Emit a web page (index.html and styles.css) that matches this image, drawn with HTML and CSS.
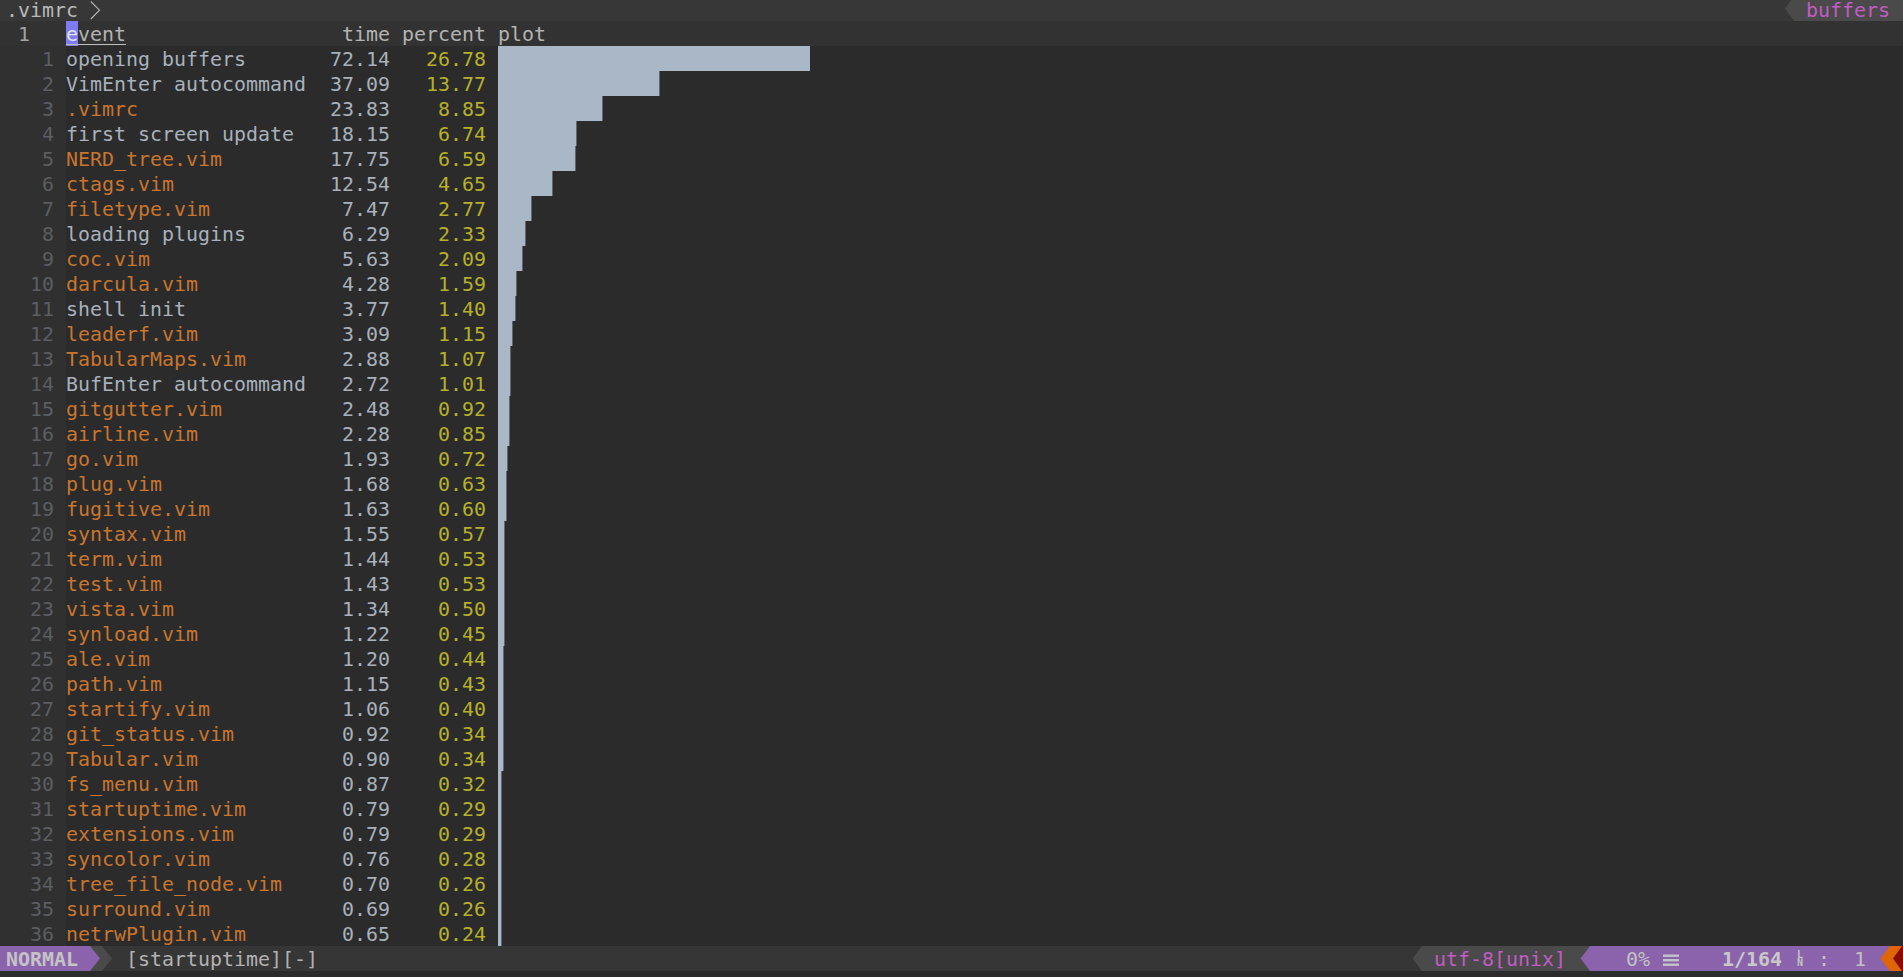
FILE: index.html
```html
<!DOCTYPE html>
<html>
<head>
<meta charset="utf-8">
<title>startuptime</title>
<link rel="stylesheet" href="styles.css">
</head>
<body>
<div class="screen">
  <div class="tabline">
    <span class="tabname">.vimrc</span>
    <svg class="chev" width="12" height="21" viewBox="0 0 12 21"><polyline points="0.8,1.5 9.5,10.2 0.8,19" fill="none" stroke="#b4b4b4" stroke-width="1.1"/></svg>
    <span class="spacer"></span>
    <svg class="pl" width="12" height="21" viewBox="0 0 12 21"><polygon points="12,-4 3,8.5 12,21" fill="#4a4a4a"/></svg>
    <span class="tabsel">buffers</span>
  </div>

  <div class="buffer">
    <div class="row cur">
      <span class="ln curnr">1</span>
      <span class="ev hdr"><span class="word"><span class="cursor">e</span>vent</span></span>
      <span class="tm hdr">time</span>
      <span class="pc hdr">percent</span>
      <span class="gap"></span>
      <span class="plot hdr">plot</span>
    </div>
    <div class="row"><span class="ln">1</span><span class="ev">opening buffers</span><span class="tm">72.14</span><span class="pc">26.78</span><span class="gap"></span><span class="plot"><span class="bar full" style="width:312px"></span></span></div>
    <div class="row"><span class="ln">2</span><span class="ev">VimEnter autocommand</span><span class="tm">37.09</span><span class="pc">13.77</span><span class="gap"></span><span class="plot"><span class="bar" style="width:160.5px"></span></span></div>
    <div class="row"><span class="ln">3</span><span class="ev vim">.vimrc</span><span class="tm">23.83</span><span class="pc">8.85</span><span class="gap"></span><span class="plot"><span class="bar" style="width:103.5px"></span></span></div>
    <div class="row"><span class="ln">4</span><span class="ev">first screen update</span><span class="tm">18.15</span><span class="pc">6.74</span><span class="gap"></span><span class="plot"><span class="bar" style="width:78px"></span></span></div>
    <div class="row"><span class="ln">5</span><span class="ev vim">NERD_tree.vim</span><span class="tm">17.75</span><span class="pc">6.59</span><span class="gap"></span><span class="plot"><span class="bar" style="width:76.5px"></span></span></div>
    <div class="row"><span class="ln">6</span><span class="ev vim">ctags.vim</span><span class="tm">12.54</span><span class="pc">4.65</span><span class="gap"></span><span class="plot"><span class="bar" style="width:54px"></span></span></div>
    <div class="row"><span class="ln">7</span><span class="ev vim">filetype.vim</span><span class="tm">7.47</span><span class="pc">2.77</span><span class="gap"></span><span class="plot"><span class="bar" style="width:33px"></span></span></div>
    <div class="row"><span class="ln">8</span><span class="ev">loading plugins</span><span class="tm">6.29</span><span class="pc">2.33</span><span class="gap"></span><span class="plot"><span class="bar" style="width:27px"></span></span></div>
    <div class="row"><span class="ln">9</span><span class="ev vim">coc.vim</span><span class="tm">5.63</span><span class="pc">2.09</span><span class="gap"></span><span class="plot"><span class="bar" style="width:24px"></span></span></div>
    <div class="row"><span class="ln">10</span><span class="ev vim">darcula.vim</span><span class="tm">4.28</span><span class="pc">1.59</span><span class="gap"></span><span class="plot"><span class="bar" style="width:18px"></span></span></div>
    <div class="row"><span class="ln">11</span><span class="ev">shell init</span><span class="tm">3.77</span><span class="pc">1.40</span><span class="gap"></span><span class="plot"><span class="bar" style="width:16.5px"></span></span></div>
    <div class="row"><span class="ln">12</span><span class="ev vim">leaderf.vim</span><span class="tm">3.09</span><span class="pc">1.15</span><span class="gap"></span><span class="plot"><span class="bar" style="width:13.5px"></span></span></div>
    <div class="row"><span class="ln">13</span><span class="ev vim">TabularMaps.vim</span><span class="tm">2.88</span><span class="pc">1.07</span><span class="gap"></span><span class="plot"><span class="bar" style="width:12px"></span></span></div>
    <div class="row"><span class="ln">14</span><span class="ev">BufEnter autocommand</span><span class="tm">2.72</span><span class="pc">1.01</span><span class="gap"></span><span class="plot"><span class="bar" style="width:12px"></span></span></div>
    <div class="row"><span class="ln">15</span><span class="ev vim">gitgutter.vim</span><span class="tm">2.48</span><span class="pc">0.92</span><span class="gap"></span><span class="plot"><span class="bar" style="width:10.5px"></span></span></div>
    <div class="row"><span class="ln">16</span><span class="ev vim">airline.vim</span><span class="tm">2.28</span><span class="pc">0.85</span><span class="gap"></span><span class="plot"><span class="bar" style="width:10.5px"></span></span></div>
    <div class="row"><span class="ln">17</span><span class="ev vim">go.vim</span><span class="tm">1.93</span><span class="pc">0.72</span><span class="gap"></span><span class="plot"><span class="bar" style="width:9px"></span></span></div>
    <div class="row"><span class="ln">18</span><span class="ev vim">plug.vim</span><span class="tm">1.68</span><span class="pc">0.63</span><span class="gap"></span><span class="plot"><span class="bar" style="width:7.5px"></span></span></div>
    <div class="row"><span class="ln">19</span><span class="ev vim">fugitive.vim</span><span class="tm">1.63</span><span class="pc">0.60</span><span class="gap"></span><span class="plot"><span class="bar" style="width:7.5px"></span></span></div>
    <div class="row"><span class="ln">20</span><span class="ev vim">syntax.vim</span><span class="tm">1.55</span><span class="pc">0.57</span><span class="gap"></span><span class="plot"><span class="bar" style="width:6px"></span></span></div>
    <div class="row"><span class="ln">21</span><span class="ev vim">term.vim</span><span class="tm">1.44</span><span class="pc">0.53</span><span class="gap"></span><span class="plot"><span class="bar" style="width:6px"></span></span></div>
    <div class="row"><span class="ln">22</span><span class="ev vim">test.vim</span><span class="tm">1.43</span><span class="pc">0.53</span><span class="gap"></span><span class="plot"><span class="bar" style="width:6px"></span></span></div>
    <div class="row"><span class="ln">23</span><span class="ev vim">vista.vim</span><span class="tm">1.34</span><span class="pc">0.50</span><span class="gap"></span><span class="plot"><span class="bar" style="width:6px"></span></span></div>
    <div class="row"><span class="ln">24</span><span class="ev vim">synload.vim</span><span class="tm">1.22</span><span class="pc">0.45</span><span class="gap"></span><span class="plot"><span class="bar" style="width:6px"></span></span></div>
    <div class="row"><span class="ln">25</span><span class="ev vim">ale.vim</span><span class="tm">1.20</span><span class="pc">0.44</span><span class="gap"></span><span class="plot"><span class="bar" style="width:4.5px"></span></span></div>
    <div class="row"><span class="ln">26</span><span class="ev vim">path.vim</span><span class="tm">1.15</span><span class="pc">0.43</span><span class="gap"></span><span class="plot"><span class="bar" style="width:4.5px"></span></span></div>
    <div class="row"><span class="ln">27</span><span class="ev vim">startify.vim</span><span class="tm">1.06</span><span class="pc">0.40</span><span class="gap"></span><span class="plot"><span class="bar" style="width:4.5px"></span></span></div>
    <div class="row"><span class="ln">28</span><span class="ev vim">git_status.vim</span><span class="tm">0.92</span><span class="pc">0.34</span><span class="gap"></span><span class="plot"><span class="bar" style="width:4.5px"></span></span></div>
    <div class="row"><span class="ln">29</span><span class="ev vim">Tabular.vim</span><span class="tm">0.90</span><span class="pc">0.34</span><span class="gap"></span><span class="plot"><span class="bar" style="width:4.5px"></span></span></div>
    <div class="row"><span class="ln">30</span><span class="ev vim">fs_menu.vim</span><span class="tm">0.87</span><span class="pc">0.32</span><span class="gap"></span><span class="plot"><span class="bar" style="width:3px"></span></span></div>
    <div class="row"><span class="ln">31</span><span class="ev vim">startuptime.vim</span><span class="tm">0.79</span><span class="pc">0.29</span><span class="gap"></span><span class="plot"><span class="bar" style="width:3px"></span></span></div>
    <div class="row"><span class="ln">32</span><span class="ev vim">extensions.vim</span><span class="tm">0.79</span><span class="pc">0.29</span><span class="gap"></span><span class="plot"><span class="bar" style="width:3px"></span></span></div>
    <div class="row"><span class="ln">33</span><span class="ev vim">syncolor.vim</span><span class="tm">0.76</span><span class="pc">0.28</span><span class="gap"></span><span class="plot"><span class="bar" style="width:3px"></span></span></div>
    <div class="row"><span class="ln">34</span><span class="ev vim">tree_file_node.vim</span><span class="tm">0.70</span><span class="pc">0.26</span><span class="gap"></span><span class="plot"><span class="bar" style="width:3px"></span></span></div>
    <div class="row"><span class="ln">35</span><span class="ev vim">surround.vim</span><span class="tm">0.69</span><span class="pc">0.26</span><span class="gap"></span><span class="plot"><span class="bar" style="width:3px"></span></span></div>
    <div class="row"><span class="ln">36</span><span class="ev vim">netrwPlugin.vim</span><span class="tm">0.65</span><span class="pc">0.24</span><span class="gap"></span><span class="plot"><span class="bar" style="width:3px"></span></span></div>
  </div>

  <div class="status">
    <span class="mode">NORMAL</span>
    <svg class="pl" width="12" height="25" viewBox="0 0 12 25"><rect x="0" y="0" width="12" height="25" fill="#4a4a4a"/><polygon points="0,0 10,12.5 0,25" fill="#8b63ad"/></svg>
    <svg class="pl" width="12" height="25" viewBox="0 0 12 25"><polygon points="0,0 10,12.5 0,25" fill="#4a4a4a"/></svg>
    <span class="fname">[startuptime][-]</span>
    <span class="spacer"></span>
    <svg class="pl" width="12" height="25" viewBox="0 0 12 25"><polygon points="12,0 2.6,12.5 12,25" fill="#4a4a4a"/></svg>
    <span class="enc">utf-8[unix]</span>
    <svg class="pl" width="12" height="25" viewBox="0 0 12 25"><rect x="0" y="0" width="12" height="25" fill="#4a4a4a"/><polygon points="12,0 2.6,12.5 12,25" fill="#8b63ad"/></svg>
    <span class="pos"><span class="sp3"></span><span>0%</span><span class="sp1"></span><svg class="menu" width="12" height="25" viewBox="0 0 12 25"><rect x="1" y="8.5" width="16" height="2.4" fill="#c4c4c4"/><rect x="1" y="13" width="16" height="2.4" fill="#c4c4c4"/><rect x="1" y="17.5" width="16" height="2.4" fill="#c4c4c4"/></svg><span class="sp4"></span><b class="lnum">1/164</b><span class="sp1"></span><span class="lnsym"><span>L</span><span>N</span></span><span class="sp1"></span><span>:</span><span class="sp2"></span><span>1</span><span class="sp1"></span></span>
    <svg class="pl" width="12" height="25" viewBox="0 0 12 25"><rect x="0" y="0" width="12" height="25" fill="#8b63ad"/><polygon points="12,0 2.4,12.5 12,25" fill="#de6508"/></svg>
    <svg class="pl" width="12" height="25" viewBox="0 0 12 25"><rect x="0" y="0" width="12" height="25" fill="#de6508"/><polygon points="12,0 3,12.5 12,25" fill="#8a0a06"/></svg>
    <span class="tail"></span>
  </div>
  <div class="cmdline"></div>
</div>
</body>
</html>
```

FILE: styles.css
```css
html, body {
  margin: 0;
  padding: 0;
  background: #2b2b2b;
  overflow: hidden;
}

.screen {
  width: 1903px;
  height: 977px;
  display: flex;
  flex-direction: column;
  font-family: "DejaVu Sans Mono", "Liberation Mono", monospace;
  font-size: 19.93px;
  line-height: 25px;
  color: #a8b1bc;
  white-space: pre;
}

/* ---------- tabline ---------- */
.tabline {
  height: 21px;
  flex: none;
  display: flex;
  align-items: flex-start;
  background: #373737;
  line-height: 21px;
  overflow: hidden;
}
.tabname {
  padding-left: 6px;
  color: #b9b9b9;
}
.chev {
  margin-left: 12px;
  display: block;
}
.spacer {
  flex: 1;
}
.pl {
  display: block;
  flex: none;
}
.tabsel {
  background: #4a4a4a;
  color: #c25cc4;
  padding: 0 13px 0 12px;
  height: 21px;
}

/* ---------- buffer ---------- */
.buffer {
  flex: none;
  display: flex;
  flex-direction: column;
}
.row {
  display: flex;
  height: 25px;
}
.row.cur {
  background: #323232;
}
.ln,
.ev,
.tm,
.pc,
.plot.hdr {
  padding-top: 1px;
}
.ln {
  width: 66px;
  height: 25px;
  box-sizing: border-box;
  padding-right: 12px;
  text-align: right;
  color: #5b5e62;
  background: #303030;
  flex: none;
}
.row.cur .ln {
  background: #323232;
}
.ln.curnr {
  text-align: left;
  padding-left: 18px;
  color: #a4a4a4;
}
.ev {
  width: 240px;
  flex: none;
  color: #a8b1bc;
}
.ev.vim {
  color: #c8752f;
}
.tm {
  width: 84px;
  flex: none;
  text-align: right;
  color: #a8b1bc;
}
.pc {
  width: 96px;
  flex: none;
  text-align: right;
  color: #b6b02a;
}
.gap {
  width: 12px;
  flex: none;
}
.plot {
  flex: 1;
  display: flex;
}
.hdr {
  color: #b3b3b3;
}
.word,
.cursor {
  text-decoration: underline;
  text-decoration-color: #bdbdbd;
  text-decoration-thickness: 1px;
  text-underline-offset: 3px;
}
.cursor {
  display: inline-block;
  vertical-align: top;
  margin-top: -1px;
  height: 25px;
  line-height: 27px;
  background: #7e7cf0;
  color: #dfe4f0;
}
.bar {
  display: block;
  height: 25px;
  background: #a9b7c7;
  box-shadow: 1px 0 0 #5f666e;
}
.bar.full {
  box-shadow: none;
}

/* ---------- statusline ---------- */
.status {
  height: 25px;
  flex: none;
  display: flex;
  background: #363636;
  color: #b8b8b8;
  line-height: 27px;
}
.mode {
  background: #8b63ad;
  color: #c4c4c4;
  font-weight: bold;
  padding-left: 6px;
  width: 84px;
}
.fname {
  margin-left: 12px;
  color: #b2b2b2;
}
.enc {
  background: #4a4a4a;
  color: #c25cc4;
  padding: 0 12px;
}
.pos {
  display: flex;
  background: #8b63ad;
  color: #c2c2c2;
  width: 288px;
}
.sp1 { width: 12px; }
.sp2 { width: 24px; }
.sp3 { width: 36px; }
.sp4 { width: 48px; }
.menu {
  display: block;
  overflow: visible;
}
.lnum {
  font-weight: bold;
  color: #c8c8c8;
}
.lnsym {
  width: 12px;
  display: flex;
  flex-direction: column;
  align-items: center;
  justify-content: center;
  font-size: 10px;
  line-height: 8px;
  font-weight: bold;
  color: #c2c2c2;
}
.tail {
  width: 1px;
  background: #8a0a06;
}
.cmdline {
  flex: 1;
  background: #2b2b2b;
}
```
